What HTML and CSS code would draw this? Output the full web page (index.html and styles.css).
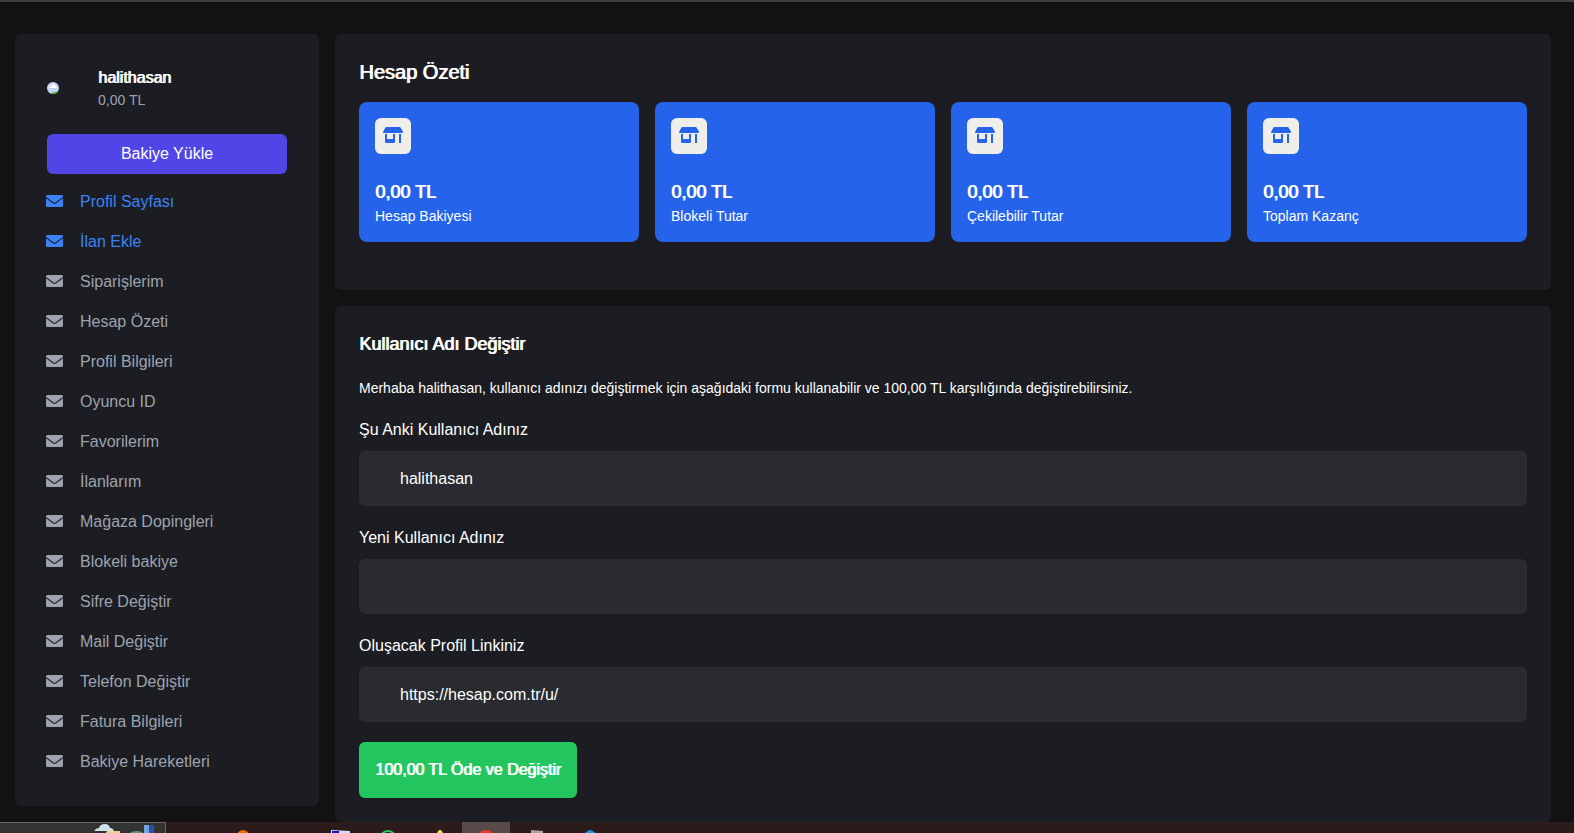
FILE: index.html
```html
<!DOCTYPE html>
<html lang="tr">
<head>
    <meta charset="UTF-8">
    <meta name="viewport" content="width=device-width, initial-scale=1.0">
    <title>Kullanıcı Adı Değiştir</title>
    <link rel="stylesheet" href="styles.css">
</head>
<body>
    <svg class="sprite" aria-hidden="true">
        <symbol id="mail" viewBox="0 0 17 12">
            <path d="M1.500 0h14A1.500 1.500 0 0 1 17 1.500v.6L9.300 7.600a1.400 1.400 0 0 1-1.600 0L0 2.100v-.6A1.500 1.500 0 0 1 1.500 0z"/>
            <path d="M0 3.300l7.200 5.100a2.200 2.200 0 0 0 2.600 0L17 3.300v7.200a1.500 1.500 0 0 1-1.500 1.500h-14A1.500 1.500 0 0 1 0 10.500z"/>
        </symbol>
        <symbol id="shop" viewBox="0 0 20 16">
            <path d="M3.300 0h13.400q.5 0 .8.500l2.300 4q.6 1.500-.8 1.500H1Q-.4 6 .2 4.500l2.300-4Q2.800 0 3.300 0z"/>
            <path d="M2 7h2v5h6V7h2v8q0 1-1 1H3q-1 0-1-1zM16 7h2v9h-2z"/>
        </symbol>
    </svg>

    <div class="container">
        <aside class="sidebar">
            <div class="user">
                <svg class="avatar" viewBox="0 0 12 12" role="img" aria-label="Avatar">
                    <circle cx="6" cy="6" r="6" fill="#c3d5f5"/>
                    <path d="M2 6q0-2 2-2 .4-2 2.300-2 2 0 2.400 2Q10 4.200 10 6z" fill="#fff"/>
                    <path d="M4 11.700Q6 9.500 10.600 9.900A6 6 0 0 1 4 11.700z" fill="#4fae35"/>
                </svg>
                <div>
                    <div class="user-name">halithasan</div>
                    <div class="user-balance">0,00 TL</div>
                </div>
            </div>
            <button type="button" class="btn-load">Bakiye Yükle</button>
            <nav class="menu">
                <a href="#" class="active"><svg><use href="#mail"/></svg>Profil Sayfası</a>
                <a href="#" class="active"><svg><use href="#mail"/></svg>İlan Ekle</a>
                <a href="#"><svg><use href="#mail"/></svg>Siparişlerim</a>
                <a href="#"><svg><use href="#mail"/></svg>Hesap Özeti</a>
                <a href="#"><svg><use href="#mail"/></svg>Profil Bilgileri</a>
                <a href="#"><svg><use href="#mail"/></svg>Oyuncu ID</a>
                <a href="#"><svg><use href="#mail"/></svg>Favorilerim</a>
                <a href="#"><svg><use href="#mail"/></svg>İlanlarım</a>
                <a href="#"><svg><use href="#mail"/></svg>Mağaza Dopingleri</a>
                <a href="#"><svg><use href="#mail"/></svg>Blokeli bakiye</a>
                <a href="#"><svg><use href="#mail"/></svg>Sifre Değiştir</a>
                <a href="#"><svg><use href="#mail"/></svg>Mail Değiştir</a>
                <a href="#"><svg><use href="#mail"/></svg>Telefon Değiştir</a>
                <a href="#"><svg><use href="#mail"/></svg>Fatura Bilgileri</a>
                <a href="#"><svg><use href="#mail"/></svg>Bakiye Hareketleri</a>
            </nav>
        </aside>

        <main class="content">
            <section class="card summary">
                <h2>Hesap Özeti</h2>
                <div class="stats">
                    <div class="stat">
                        <span class="stat-icon"><svg><use href="#shop"/></svg></span>
                        <div class="stat-value">0,00 TL</div>
                        <div class="stat-label">Hesap Bakiyesi</div>
                    </div>
                    <div class="stat">
                        <span class="stat-icon"><svg><use href="#shop"/></svg></span>
                        <div class="stat-value">0,00 TL</div>
                        <div class="stat-label">Blokeli Tutar</div>
                    </div>
                    <div class="stat">
                        <span class="stat-icon"><svg><use href="#shop"/></svg></span>
                        <div class="stat-value">0,00 TL</div>
                        <div class="stat-label">Çekilebilir Tutar</div>
                    </div>
                    <div class="stat">
                        <span class="stat-icon"><svg><use href="#shop"/></svg></span>
                        <div class="stat-value">0,00 TL</div>
                        <div class="stat-label">Toplam Kazanç</div>
                    </div>
                </div>
            </section>

            <section class="card">
                <h3>Kullanıcı Adı Değiştir</h3>
                <form class="name-form">
                    <p>Merhaba halithasan, kullanıcı adınızı değiştirmek için aşağıdaki formu kullanabilir ve 100,00 TL karşılığında değiştirebilirsiniz.</p>
                    <div class="field">
                        <label for="currentName">Şu Anki Kullanıcı Adınız</label>
                        <input type="text" id="currentName" value="halithasan" readonly>
                    </div>
                    <div class="field">
                        <label for="newName">Yeni Kullanıcı Adınız</label>
                        <input type="text" id="newName">
                    </div>
                    <div class="field">
                        <label for="profileLink">Oluşacak Profil Linkiniz</label>
                        <input type="text" id="profileLink" value="https://hesap.com.tr/u/" readonly>
                    </div>
                    <button type="button" class="btn-pay">100,00 TL Öde ve Değiştir</button>
                </form>
            </section>
        </main>
    </div>

    <footer class="taskbar">
        <div class="widget">
            <svg width="60" height="10" viewBox="0 0 60 10">
                <path d="M0 8q2-3 5-3 1-4 6-4 4 0 5 4 3 0 4 3z" fill="#cfe2e6"/>
                <path d="M13 8h13v2H12z" fill="#f3cf98"/>
                <path d="M36 10q2-2 7-2t6 2z" fill="#5b9a72"/>
                <path d="M50 2h5v8h-5z" fill="#6fa5e0"/>
                <path d="M55 2h5v8h-5z" fill="#2850a8"/>
            </svg>
        </div>
        <svg class="apps" width="440" height="11" viewBox="0 0 440 11">
            <path d="M296 0h48v11h-48z" fill="#574a49"/>
            <circle cx="77" cy="14" r="6" fill="#f26a00"/>
            <path d="M165 8l19 1v2h-19z" fill="#d6dcf5"/>
            <path d="M166 9h7v2h-7z" fill="#1214d0"/>
            <circle cx="222" cy="17" r="8" fill="none" stroke="#27cf63" stroke-width="2"/>
            <path d="M271 11l2-3h2l2 3z" fill="#f7df45"/>
            <circle cx="320" cy="18" r="10" fill="#e83b2d"/>
            <path d="M365 8l12 1v2h-12z" fill="#a9a7a2"/>
            <path d="M419 11l4-3h2l5 3z" fill="#1495e0"/>
        </svg>
    </footer>
</body>
</html>
```
FILE: styles.css
```css
* {
    box-sizing: border-box;
}
body {
    margin: 0;
    min-height: 100vh;
    border-top: 2px solid #3f3f46;
    background: #121212;
    color: #fff;
    font-family: "Liberation Sans", Arial, sans-serif;
    font-size: 16px;
    line-height: 24px;
}
h2, h3, p {
    margin: 0;
}
button, input {
    font: inherit;
    color: inherit;
    border: 0;
}
.sprite {
    display: none;
}
.container {
    display: flex;
    align-items: flex-start;
    gap: 16px;
    padding: 32px 23px 0 15px;
}

/* bold look that keeps the regular letter widths */
h2, h3, .user-name, .stat-value, .btn-pay {
    font-weight: 400;
    text-shadow: 1px 0 0 currentColor;
}

/* sidebar */
.sidebar {
    flex: 0 0 304px;
    padding: 32px 32px 24px;
    border-radius: 6px;
    background: #1c1d22;
}
.user {
    display: flex;
    align-items: center;
    gap: 39px;
    margin-bottom: 24px;
}
.avatar {
    width: 12px;
    height: 12px;
}
.user-balance {
    color: #9ca3af;
    font-size: 14px;
    line-height: 20px;
}
.btn-load {
    width: 100%;
    height: 40px;
    margin-bottom: 8px;
    border-radius: 6px;
    background: #4f46e5;
    cursor: pointer;
}
.menu a {
    display: flex;
    align-items: center;
    gap: 17px;
    height: 40px;
    margin-left: -1px;
    color: #9ca3af;
    text-decoration: none;
}
.menu a.active {
    color: #3b82f6;
}
.menu svg {
    width: 17px;
    height: 12px;
    margin-bottom: 2px;
    fill: currentColor;
}

/* content */
.content {
    flex: 1;
    min-width: 0;
    display: grid;
    gap: 16px;
}
.card {
    padding: 24px;
    border-radius: 6px;
    background: #1c1d22;
}
.summary {
    padding-bottom: 48px;
}
h2 {
    margin-bottom: 16px;
    font-size: 20px;
    line-height: 28px;
}
h3 {
    margin-bottom: 20px;
    font-size: 18px;
    line-height: 28px;
}
.stats {
    display: grid;
    grid-template-columns: repeat(4, 1fr);
    gap: 16px;
}
.stat {
    padding: 16px;
    border-radius: 8px;
    background: #2563eb;
}
.stat-icon {
    display: flex;
    justify-content: center;
    align-items: center;
    width: 36px;
    height: 36px;
    margin-bottom: 24px;
    padding-bottom: 2px;
    border-radius: 6px;
    background: #f0eeea;
}
.stat-icon svg {
    width: 20px;
    height: 16px;
    fill: #2563eb;
}
.stat-value {
    font-size: 18px;
    line-height: 28px;
}
.stat-label, .name-form p {
    font-size: 14px;
    line-height: 20px;
}

/* form */
.name-form {
    display: grid;
    gap: 20px;
}
.field {
    display: grid;
    gap: 9px;
}
.field input {
    width: 100%;
    height: 55px;
    padding: 0 41px;
    border-radius: 6px;
    background: #2a2b30;
}
.btn-pay {
    justify-self: start;
    height: 56px;
    padding: 0 16px;
    border-radius: 6px;
    background: #22c55e;
    cursor: pointer;
}

/* taskbar */
.taskbar {
    display: flex;
    height: 11px;
    overflow: hidden;
    background: #2b1b1a;
}
.widget {
    display: flex;
    justify-content: flex-end;
    width: 166px;
    padding-right: 11px;
    border-top: 1px solid #666;
    border-right: 1px solid #666;
    background: #333;
}
```
